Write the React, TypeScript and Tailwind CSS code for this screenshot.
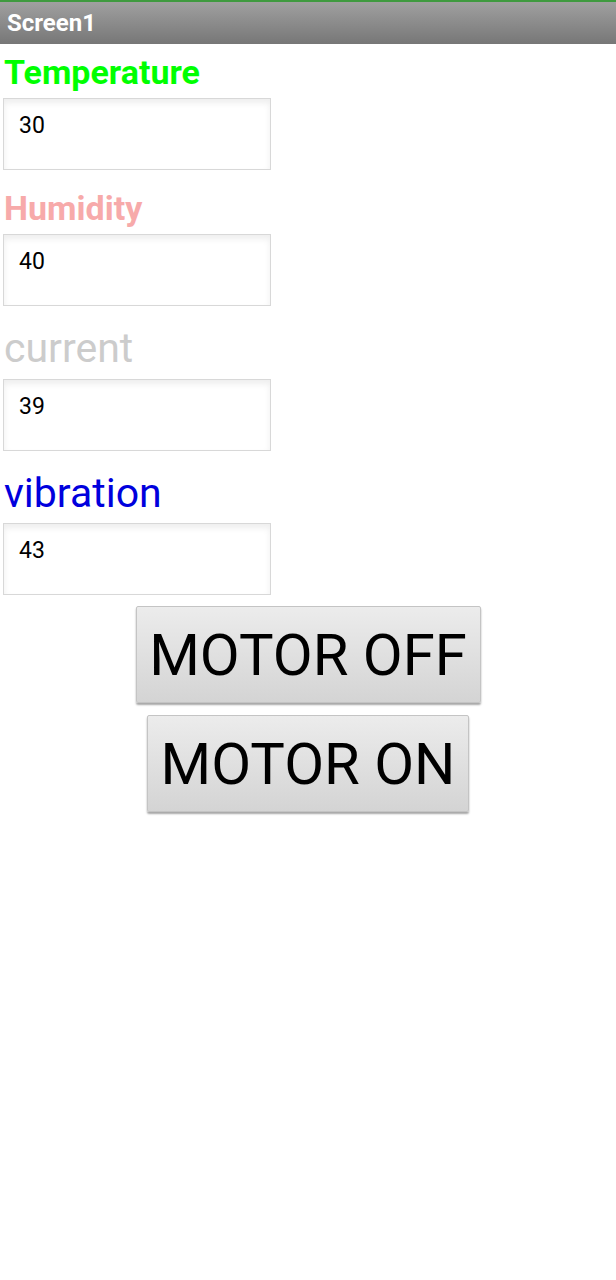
import React from 'react';

const fields = [
  { label: 'Temperature', value: '30', cls: 'h-[54px] text-[34px] font-bold text-[#00ff00] pt-[11px]' },
  { label: 'Humidity', value: '40', cls: 'h-[64px] text-[34px] font-bold text-[#f7aaaa] pt-[21px]' },
  { label: 'current', value: '39', cls: 'h-[73px] text-[41px] text-[#cccccc] pt-[22px]' },
  { label: 'vibration', value: '43', cls: 'h-[72px] text-[41px] text-[#0000dd] pt-[22px]' },
];

function Box({ value }: { value: string }) {
  return (
    <div className="ml-[3px] w-[268px] h-[72px] border border-[#d8d8d8] bg-white shadow-[inset_0_4px_6px_rgba(0,0,0,0.07)] pl-[15px] pt-[12px] text-[23px] text-black leading-none">
      <span className="block pt-[3px]">{value}</span>
    </div>
  );
}

function MotorButton({ text, w }: { text: string; w: string }) {
  return (
    <button
      className={`${w} h-[97px] border border-[#c4c4c4] rounded-[2px] bg-gradient-to-b from-[#ececec] to-[#d4d4d4] shadow-[0_2px_2px_rgba(0,0,0,0.35)] text-[58px] text-black leading-none flex items-center justify-center`}
    >
      {text}
    </button>
  );
}

export default function App() {
  return (
    <div className="w-[616px] min-h-[1280px] bg-white font-['Roboto','Liberation_Sans',sans-serif]">
      {/* title bar */}
      <div className="h-[44px] border-t-2 border-[#3f9a3f] bg-gradient-to-b from-[#a0a0a0] to-[#777777] flex items-center pl-[7px]">
        <span className="text-white font-bold text-[24px] leading-none">Screen1</span>
      </div>

      {fields.map((f) => (
        <div key={f.label}>
          <div className={`${f.cls} pl-[4px] leading-none`}>{f.label}</div>
          <Box value={f.value} />
        </div>
      ))}

      <div className="flex flex-col items-center mt-[11px] gap-[12px]">
        <MotorButton text="MOTOR OFF" w="w-[345px]" />
        <MotorButton text="MOTOR ON" w="w-[322px]" />
      </div>
    </div>
  );
}
